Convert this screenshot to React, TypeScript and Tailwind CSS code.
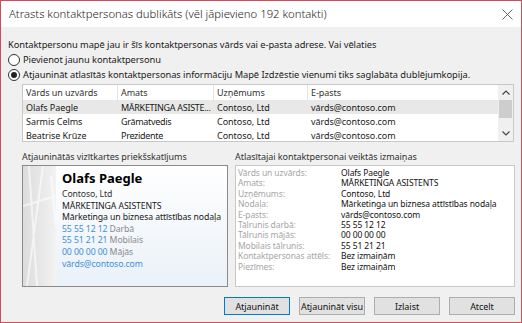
import React from 'react';

const rows = [
  { name: 'Olafs Paegle', title: 'MĀRKETINGA ASISTE...', company: 'Contoso, Ltd', email: 'vārds@contoso.com', selected: true },
  { name: 'Sarmis Celms', title: 'Grāmatvedis', company: 'Contoso, Ltd', email: 'vārds@contoso.com', selected: false },
  { name: 'Beatrise Krūze', title: 'Prezidente', company: 'Contoso, Ltd', email: 'vārds@contoso.com', selected: false },
];

const changes: [string, string][] = [
  ['Vārds un uzvārds:', 'Olafs Paegle'],
  ['Amats:', 'MĀRKETINGA ASISTENTS'],
  ['Uzņēmums:', 'Contoso, Ltd'],
  ['Nodaļa:', 'Mārketinga un biznesa attīstības nodaļa'],
  ['E-pasts:', 'vārds@contoso.com'],
  ['Tālrunis darbā:', '55 55 12 12'],
  ['Tālrunis mājās:', '00 00 00 00'],
  ['Mobilais tālrunis:', '55 51 21 21'],
  ['Kontaktpersonas attēls:', 'Bez izmaiņām'],
  ['Piezīmes:', 'Bez izmaiņām'],
];

const Radio = ({ checked, label }: { checked?: boolean; label: string }) => (
  <div className="flex items-center h-[15px] gap-[3px] whitespace-nowrap">
    <span className="w-[12px] h-[12px] shrink-0 rounded-full border border-[#333] bg-white flex items-center justify-center">
      {checked && <span className="w-[6px] h-[6px] rounded-full bg-[#222]" />}
    </span>
    <span>{label}</span>
  </div>
);

const Button = ({ label, primary }: { label: string; primary?: boolean }) => (
  <button
    className={`w-[66px] h-[18px] px-0 flex items-center justify-center whitespace-nowrap bg-[#e1e1e1] border text-[9px] text-[#111] ${
      primary ? 'border-[#0078d7]' : 'border-[#adadad]'
    }`}
  >
    {label}
  </button>
);

export default function App() {
  return (
    <div
      className="w-[522px] h-[323px] border border-[#c9505a] flex flex-col text-[#1a1a1a] overflow-hidden"
      style={{ fontFamily: '"Noto Sans", "DejaVu Sans", sans-serif' }}
    >
      {/* Title bar */}
      <div className="h-[26px] bg-white flex items-center justify-between pl-[8px] pr-[7px] shrink-0">
        <span className="text-[11.3px] text-[#222] font-light whitespace-nowrap">Atrasts kontaktpersonas dublikāts (vēl jāpievieno 192 kontakti)</span>
        <svg width="11" height="11" viewBox="0 0 11 11" className="mr-[1px]">
          <path d="M0.5 0.5 L10.5 10.5 M10.5 0.5 L0.5 10.5" stroke="#555" strokeWidth="0.9" />
        </svg>
      </div>

      {/* Body */}
      <div className="flex-1 bg-[#f0f0f0] flex flex-col px-[6px] pt-[10px] text-[9.3px] leading-[15px] tracking-[-0.05px]">
        <div className="pl-[1px] whitespace-nowrap">Kontaktpersonu mapē jau ir šīs kontaktpersonas vārds vai e-pasta adrese. Vai vēlaties</div>
        <div className="pl-[1px]">
          <Radio label="Pievienot jaunu kontaktpersonu" />
          <Radio checked label="Atjaunināt atlasītās kontaktpersonas informāciju Mapē Izdzēstie vienumi tiks saglabāta dublējumkopija." />
        </div>

        {/* Table */}
        <div className="ml-[15px] mr-[1px] mt-[2px] h-[58px] border border-[#c8c8c8] bg-white flex text-[9px]">
          <div className="flex-1 flex flex-col">
            <div className="h-[15px] flex items-center text-[#333]">
              <div className="w-[95px] pl-[3px] border-r border-[#e5e5e5]">Vārds un uzvārds</div>
              <div className="w-[96px] pl-[3px] border-r border-[#e5e5e5]">Amats</div>
              <div className="w-[94px] pl-[3px] border-r border-[#e5e5e5]">Uzņēmums</div>
              <div className="flex-1 pl-[3px]">E-pasts</div>
            </div>
            {rows.map((r) => (
              <div key={r.name} className={`h-[14px] flex items-center whitespace-nowrap ${r.selected ? 'bg-[#e8e8e8]' : ''}`}>
                <div className="w-[95px] pl-[3px]">{r.name}</div>
                <div className="w-[96px] pl-[3px] tracking-[-0.3px]">{r.title}</div>
                <div className="w-[94px] pl-[3px]">{r.company}</div>
                <div className="flex-1 pl-[3px]">{r.email}</div>
              </div>
            ))}
          </div>
          {/* Scrollbar */}
          <div className="w-[15px] bg-[#f0f0f0] flex flex-col items-center">
            <div className="h-[15px] flex items-center justify-center">
              <svg width="8" height="5" viewBox="0 0 8 5"><path d="M0.5 4.5 L4 1 L7.5 4.5" stroke="#444" strokeWidth="1.2" fill="none" /></svg>
            </div>
            <div className="w-[13px] h-[18px] bg-[#cdcdcd]" />
            <div className="flex-1" />
            <div className="h-[15px] flex items-center justify-center">
              <svg width="8" height="5" viewBox="0 0 8 5"><path d="M0.5 0.5 L4 4 L7.5 0.5" stroke="#444" strokeWidth="1.2" fill="none" /></svg>
            </div>
          </div>
        </div>

        {/* Section labels */}
        <div className="flex mt-[7px] ml-[15px] h-[15px] text-[#333] whitespace-nowrap text-[9px]">
          <div className="w-[213px]">Atjauninātās vizītkartes priekšskatījums</div>
          <div>Atlasītajai kontaktpersonai veiktās izmaiņas</div>
        </div>

        {/* Panels */}
        <div className="flex ml-[15px] mt-[1px] h-[122px] gap-[7px]">
          <div className="w-[206px] border border-[#8a8a8a] flex bg-gradient-to-b from-white to-[#eaf1f8]">
            <div className="w-[33px] shrink-0 bg-gradient-to-r from-[#dcdcdc] to-[#f2f2f2] relative overflow-hidden">
              <svg width="33" height="120" viewBox="0 0 33 120" className="absolute inset-0">
                <path d="M6 0 L14 120 M20 0 L4 120 M28 10 L33 60 M0 40 L33 30" stroke="#ffffff" strokeWidth="2" opacity="0.6" />
              </svg>
            </div>
            <div className="pl-[6px] pt-[4px] leading-[11.6px] text-[8.7px] whitespace-nowrap tracking-[-0.1px]">
              <div className="text-[13px] font-bold leading-[17px] text-black tracking-normal">Olafs Paegle</div>
              <div className="text-[#333] mt-[2px]">Contoso, Ltd</div>
              <div>MĀRKETINGA ASISTENTS</div>
              <div>Mārketinga un biznesa attīstības nodaļa</div>
              <div><span className="text-[#3d8fdb]">55 55 12 12</span> <span className="text-[#8a8a8a]">Darbā</span></div>
              <div><span className="text-[#3d8fdb]">55 51 21 21</span> <span className="text-[#8a8a8a]">Mobilais</span></div>
              <div><span className="text-[#3d8fdb]">00 00 00 00</span> <span className="text-[#8a8a8a]">Mājās</span></div>
              <div className="text-[#3d8fdb]">vārds@contoso.com</div>
            </div>
          </div>
          <div className="flex-1 border border-[#c8c8c8] bg-white pl-[2px] pt-[2px] leading-[10.4px] text-[8.5px] whitespace-nowrap tracking-[-0.1px]">
            {changes.map(([k, v]) => (
              <div key={k} className="flex">
                <div className="w-[103px] shrink-0 text-[#a6a6a6]">{k}</div>
                <div className="text-[#111]">{v}</div>
              </div>
            ))}
          </div>
        </div>

        {/* Buttons */}
        <div className="flex justify-end gap-[9px] mt-[10px]">
          <Button primary label="Atjaunināt" />
          <Button label="Atjaunināt visu" />
          <Button label="Izlaist" />
          <Button label="Atcelt" />
        </div>
      </div>
    </div>
  );
}
